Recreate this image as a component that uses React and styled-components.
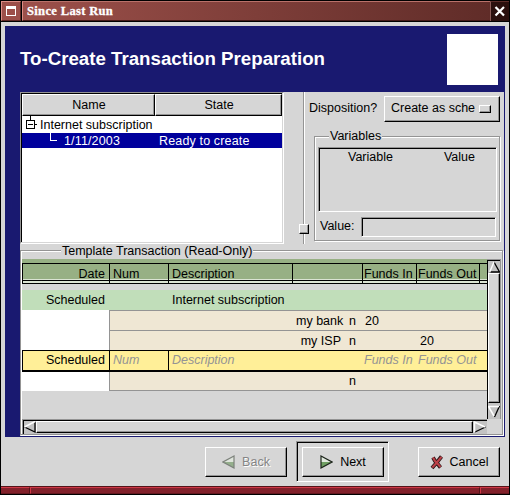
import React from "react";
import styled, { createGlobalStyle, css } from "styled-components";

const GlobalStyle = createGlobalStyle`
  * { box-sizing: border-box; }
  body { margin: 0; background: #000; }
`;

const gray = "#d6d6d6";
const shade = "#949494";

const Window = styled.div`
  width: 510px;
  height: 495px;
  padding: 1px;
  background: #000;
  display: flex;
  flex-direction: column;
  overflow: hidden;
  color: #000;
  font: 12.5px/15px "Liberation Sans", Arial, sans-serif;
  white-space: pre;
  cursor: default;
`;

const TitleBar = styled.header`
  height: 20px;
  flex: none;
  display: flex;
  margin-bottom: 1px;
`;

const MenuButton = styled.div`
  width: 20px;
  margin-right: 1px;
  background: #9c504a;
  border: 1px solid #dc8d85;
  border-right-color: #5d2623;
  border-bottom-color: #5d2623;
`;

const Caption = styled.div`
  flex: 1;
  padding-left: 4px;
  background: linear-gradient(90deg, #9c504a, #602c28);
  border: 1px solid #dc8d85;
  border-top-color: #b9716a;
  border-bottom-color: #431917;
  border-right: 0;
  color: #fff;
  font: bold 12.5px/19px "Liberation Serif", "Times New Roman", serif;
  letter-spacing: 0.35px;
  -webkit-text-stroke: 0.3px #fff;
`;

const CloseButton = styled.div`
  width: 19px;
  background: #2b0f0d;
  border-left: 1px solid #8a5a56;
  border-top: 1px solid #5e2d2a;
`;

const Client = styled.main`
  flex: 1;
  background: ${gray};
  padding: 4px 4px 0;
`;

const Druid = styled.section`
  width: 500px;
  height: 411px;
  padding: 0 1px 1px 15px;
  background: #191970;
`;

const DruidHeader = styled.div`
  height: 66px;
  display: flex;
  justify-content: space-between;
  padding: 8px 6px 0 0;
`;

const DruidTitle = styled.h1`
  margin: 14px 0 0;
  color: #fff;
  font: bold 18.7px/22px "Liberation Sans", Arial, sans-serif;
`;

const Logo = styled.div`
  width: 51px;
  height: 51px;
  background: #fff;
`;

const Page = styled.div`
  height: 344px;
  background: ${gray};
`;

const UpperPane = styled.div`
  height: 152px;
  display: flex;
`;

const sunken = css`
  border: 1px solid;
  border-color: ${shade} #fff #fff ${shade};
`;

const raised = css`
  border: 1px solid;
  border-color: #fff #000 #000 #fff;
  box-shadow: inset -1px -1px ${shade};
`;

const Tree = styled.div`
  ${sunken}
  width: 264px;
  background: ${gray};
`;

const TreeInner = styled.div`
  height: 149px;
  width: 261px;
  border-left: 1px solid #000;
  border-top: 1px solid #000;
  background: #fff;
`;

const TreeHead = styled.div`
  display: grid;
  grid-template-columns: 133px 127px;
  height: 22px;
`;

const HeadCell = styled.div`
  ${raised}
  background: ${gray};
  padding-left: 1px;
  text-align: center;
  line-height: 20px;
`;

const TreeRow = styled.div`
  height: ${(p) => (p.$selected ? 15 : 17)}px;
  display: grid;
  grid-template-columns: 18px 119px 1fr;
  line-height: ${(p) => (p.$selected ? 16 : 18)}px;
  letter-spacing: ${(p) => (p.$selected ? 0.15 : 0)}px;
  color: ${(p) => (p.$selected ? "#fff" : "#000")};
  background: ${(p) => (p.$selected ? "#00009c" : "#fff")};
  svg { display: block; overflow: visible; }
`;

const TreeText = styled.span`
  padding-left: ${(p) => p.$indent || 0}px;
`;

const Splitter = styled.div`
  width: 10px;
  margin-left: 15px;
  display: flex;
  flex-direction: column;
  align-items: center;
  background: linear-gradient(90deg, transparent 4px, ${shade} 4px 5px, #fff 5px 6px, transparent 6px);
`;

const SplitGrip = styled.div`
  ${raised}
  width: 10px;
  height: 10px;
  margin-top: 132px;
  background: ${gray};
`;

const Options = styled.div`
  padding-top: 4px;
  flex: 1;
`;

const Disposition = styled.div`
  display: flex;
  height: 40px;
`;

const DispositionLabel = styled.label`
  width: 75px;
  padding-top: 5px;
`;

const OptionMenu = styled.button`
  ${raised}
  width: 116px;
  height: 26px;
  padding: 0 8px 2px 6px;
  display: flex;
  align-items: center;
  justify-content: space-between;
  background: ${gray};
  font: inherit;
  color: inherit;
`;

const OptionMark = styled.span`
  ${raised}
  width: 12px;
  height: 8px;
  margin-top: 1px;
`;

const Frame = styled.fieldset`
  position: relative;
  margin: 0;
  min-width: 0;
  border: 1px solid ${shade};
  box-shadow: inset 1px 1px #fff, 1px 1px #fff;
`;

const FrameTitle = styled.span`
  position: absolute;
  top: ${(p) => p.$top || -8}px;
  left: ${(p) => p.$left}px;
  padding: 0 1px;
  background: ${gray};
`;

const VariablesFrame = styled(Frame)`
  margin-left: 5px;
  width: 186px;
  height: 105px;
  padding: 10px 3px 3px;
`;

const VariableList = styled.div`
  ${sunken}
  width: 179px;
  height: 65px;
  padding: 2px 21px 0 29px;
  display: flex;
  justify-content: space-between;
  box-shadow: inset 1px 1px #000;
`;

const ValueRow = styled.div`
  display: flex;
  margin-top: 5px;
  padding-left: 2px;
`;

const ValueLabel = styled.label`
  width: 41px;
  padding-top: 2px;
`;

const Entry = styled.div`
  ${sunken}
  width: 135px;
  height: 20px;
  box-shadow: inset 1px 1px #000;
`;

const TemplateFrame = styled(Frame)`
  margin-top: 6px;
  width: 483px;
  height: 185px;
  padding: 8px 0 0 1px;
`;

const Sheet = styled.div`
  display: grid;
  grid-template-columns: 465px 14px;
  grid-template-rows: 160px 15px;
`;

const Register = styled.div`
  background: ${gray};
`;

const columns = "87px 59px 124px 53px 17px 54px 63px 8px";

const RegisterHead = styled.div`
  display: grid;
  grid-template-columns: 87px 59px 124px 70px 54px 63px 8px;
  height: 25px;
  border-top: 4px solid #97b084;
  border-bottom: 1px solid #000;
  background: linear-gradient(#000 1px, #97b084 1px 16px, #dbe4d3 16px 17px, #000 17px 18px, #dbe4d3 18px);
`;

const RegHeadCell = styled.div`
  border-left: 1px solid #000;
  padding: 3px 4px 0 3px;
  line-height: 16px;
  text-align: ${(p) => (p.$right ? "right" : "left")};
  ${(p) => p.$tight && "padding-left: 1px; padding-right: 0;"}
`;

const RegRow = styled.div`
  display: grid;
  grid-template-columns: ${columns};
  height: ${(p) => (p.$last ? 19 : 20)}px;
  line-height: 20px;
  ${(p) => p.$kind === "main" && "margin-top: 6px; height: 20px; background: #c1deba; line-height: 21px;"}
  ${(p) => p.$kind === "active" && "height: 22px; background: #ffef98; border: solid #000; border-width: 1px 0 2px; line-height: 19px; color: #949494; font-style: italic;"}
  ${(p) => p.$kind === "split" && "background: linear-gradient(90deg, #fff 87px, #efe7d4 87px);"}
`;

const Cell = styled.div`
  padding: 0 4px;
  text-align: ${(p) => (p.$right ? "right" : "left")};
  ${(p) => p.$lined && "border-left: 1px solid #000; padding-left: 3px;"}
  ${(p) => p.$dark && "color: #000; font-style: normal;"}
  ${(p) => p.$tight && "padding-left: 2px; padding-right: 0;"}
`;

const SplitCells = styled.div`
  grid-column: 2 / -1;
  display: grid;
  grid-template-columns: 182px 53px 16px 55px 1fr;
  border-top: ${(p) => (p.$last ? 0 : 1)}px solid ${shade};
  border-bottom: ${(p) => (p.$last ? 1 : 0)}px solid ${shade};
  border-left: 1px solid ${shade};
  line-height: ${(p) => (p.$last ? 18 : 20)}px;
  height: ${(p) => (p.$last ? 19 : 20)}px;
`;

const ScrollTrack = styled.div`
  display: flex;
  flex-direction: ${(p) => (p.$vertical ? "column" : "row")};
  border: solid ${shade};
  border-width: ${(p) => (p.$vertical ? "1px 1px 0 0" : "1px 0 0 1px")};
  box-shadow: inset 1px 1px #000;
  padding: ${(p) => (p.$vertical ? "1px 0 0 1px" : "1px 0 1px 1px")};
  background: #c3c3c3;
  svg { display: block; flex: none; }
`;

const Thumb = styled.div`
  ${raised}
  flex: 1;
  background: ${gray};
`;

const Corner = styled.div`
  background: ${gray};
`;

const Actions = styled.footer`
  display: flex;
  height: 49px;
  padding: 4px 4px 0 194px;
`;

const ActionButton = styled.button`
  ${raised}
  width: 82px;
  height: 30px;
  padding: 0;
  display: flex;
  align-items: center;
  justify-content: center;
  gap: ${(p) => p.$gap || 6}px;
  background: ${gray};
  font: inherit;
  color: ${(p) => (p.$off ? "#858585" : "#000")};
  text-shadow: ${(p) => (p.$off ? "1px 1px #fff" : "none")};
  svg { flex: none; }
`;

const Slot = styled.div`
  height: 42px;
  padding: 6px;
`;

const DefaultSlot = styled.div`
  ${sunken}
  width: 93px;
  height: 41px;
  margin: 0 23px 0 3px;
  padding: 5px;
  box-shadow: inset 1px 1px #000;
`;

const ResizeBar = styled.div`
  height: 8px;
  flex: none;
  display: grid;
  grid-template-columns: 29px 450px 29px;
  border-top: 1px solid #551318;
`;

const ResizePart = styled.div`
  background: #82212b;
  border: solid #cf3947;
  border-width: 1px 0 0 ${(p) => (p.$first ? 0 : 1)}px;
  border-right: ${(p) => (p.$end ? 0 : 1)}px solid #551318;
  border-bottom: 1px solid #641820;
`;

const arrows = {
  up: { light: "M1.5 11.5L6 1", dark: "M6 1L11.5 11H1" },
  down: { light: "M6 11L.5 1.5H11", dark: "M11.5 1L6.5 12" },
  left: { light: "M.5 6L11 .5", dark: "M.5 6L11 11V1" },
  right: { light: "M.5 11V1L11 6", dark: "M1 11L11.5 6" },
};

function ScrollArrow({ to, w = 12, h = 12 }) {
  return (
    <svg width={w} height={h} viewBox="0 0 12 12" fill="none">
      <path d={arrows[to].dark} stroke="#000" strokeWidth="1.3" />
      <path d={arrows[to].light} stroke="#fff" strokeWidth="1.5" />
    </svg>
  );
}

function Triangle({ back }) {
  return (
    <svg width="13" height="14" viewBox="0 0 13 14">
      <g transform={back ? "translate(13 0) scale(-1 1)" : undefined} opacity={back ? 0.75 : 1}>
        <path d="M1 1L12 7H1Z" fill="#e2eadf" />
        <path d="M1 7H12L1 13Z" fill={back ? "#7fa374" : "#6f9f62"} />
        <path
          d="M1 1L12 7L1 13Z"
          fill="none"
          stroke={back ? "#5f665d" : "#1c241a"}
          strokeWidth="1.2"
        />
      </g>
    </svg>
  );
}

function CancelIcon() {
  return (
    <svg width="14" height="15" viewBox="0 0 14 15" fill="none">
      <path d="M3 2.5L5 6L7 8L10.5 12.5M11.5 1.5L8 6L5.5 9L2 13" stroke="#281315" strokeWidth="3.8" />
      <path d="M3 2.5L5 6L7 8L10.5 12M11.5 1.8L8 6L5.5 9L2.3 12.5" stroke="#bc4148" strokeWidth="2.1" />
    </svg>
  );
}

function SplitRow({ account, flag, fundsIn, fundsOut, last }) {
  return (
    <RegRow $kind="split" $last={last}>
      <SplitCells $last={last}>
        <Cell />
        <Cell $right>{account}</Cell>
        <Cell>{flag}</Cell>
        <Cell>{fundsIn}</Cell>
        <Cell>{fundsOut}</Cell>
      </SplitCells>
    </RegRow>
  );
}

export default function App() {
  return (
    <>
      <GlobalStyle />
      <Window>
        <TitleBar>
          <MenuButton>
            <svg width="18" height="18" shapeRendering="crispEdges" fill="#fff">
              <path d="M4 4H14V14H4ZM5 7V13H13V7Z" fillRule="evenodd" />
            </svg>
          </MenuButton>
          <Caption>Since Last Run</Caption>
          <CloseButton>
            <svg width="18" height="18">
              <path d="M4.5 5L13 13.5M13 5L4.5 13.5" stroke="#fff" strokeWidth="2.2" />
            </svg>
          </CloseButton>
        </TitleBar>

        <Client>
          <Druid>
            <DruidHeader>
              <DruidTitle>To-Create Transaction Preparation</DruidTitle>
              <Logo />
            </DruidHeader>

            <Page>
              <UpperPane>
                <Tree>
                  <TreeInner>
                    <TreeHead>
                      <HeadCell>Name</HeadCell>
                      <HeadCell>State</HeadCell>
                    </TreeHead>
                    <TreeRow>
                      <svg width="18" height="17" shapeRendering="crispEdges">
                        <path d="M8.5 0V5M4.5 4.5H12.5V12.5H4.5ZM6 8.5H11M12 8.5H15" fill="none" stroke="#000" />
                      </svg>
                      <TreeText>Internet subscription</TreeText>
                    </TreeRow>
                    <TreeRow $selected>
                      <svg width="18" height="15" shapeRendering="crispEdges">
                        <path d="M28.5 0V7.5H35" fill="none" stroke="#fff" />
                      </svg>
                      <TreeText $indent={24}>1/11/2003</TreeText>
                      <TreeText>Ready to create</TreeText>
                    </TreeRow>
                  </TreeInner>
                </Tree>
                <Splitter>
                  <SplitGrip />
                </Splitter>
                <Options>
                  <Disposition>
                    <DispositionLabel>Disposition?</DispositionLabel>
                    <OptionMenu>
                      Create as sche
                      <OptionMark />
                    </OptionMenu>
                  </Disposition>
                  <VariablesFrame>
                    <FrameTitle $left={14}>Variables</FrameTitle>
                    <VariableList>
                      <span>Variable</span>
                      <span>Value</span>
                    </VariableList>
                    <ValueRow>
                      <ValueLabel>Value:</ValueLabel>
                      <Entry />
                    </ValueRow>
                  </VariablesFrame>
                </Options>
              </UpperPane>

              <TemplateFrame>
                <FrameTitle $left={40} $top={-7}>Template Transaction (Read-Only)</FrameTitle>
                <Sheet>
                  <Register>
                    <RegisterHead>
                      <RegHeadCell $right>Date</RegHeadCell>
                      <RegHeadCell>Num</RegHeadCell>
                      <RegHeadCell>Description</RegHeadCell>
                      <RegHeadCell />
                      <RegHeadCell $right $tight>Funds In </RegHeadCell>
                      <RegHeadCell $tight>Funds Out</RegHeadCell>
                      <RegHeadCell />
                    </RegisterHead>
                    <RegRow $kind="main">
                      <Cell $right>Scheduled</Cell>
                      <Cell />
                      <Cell>Internet subscription</Cell>
                    </RegRow>
                    <SplitRow account="my bank" flag="n" fundsIn="20" />
                    <SplitRow account="my ISP" flag="n" fundsOut="20" />
                    <RegRow $kind="active">
                      <Cell $right $dark $lined>Scheduled</Cell>
                      <Cell $lined>Num</Cell>
                      <Cell $lined>Description</Cell>
                      <Cell />
                      <Cell />
                      <Cell $right $tight>Funds In </Cell>
                      <Cell $tight>Funds Out</Cell>
                      <Cell />
                    </RegRow>
                    <SplitRow flag="n" last />
                  </Register>
                  <ScrollTrack $vertical>
                    <ScrollArrow to="up" />
                    <Thumb />
                    <ScrollArrow to="down" h={16} />
                  </ScrollTrack>
                  <ScrollTrack>
                    <ScrollArrow to="left" />
                    <Thumb />
                    <ScrollArrow to="right" w={14} />
                  </ScrollTrack>
                  <Corner />
                </Sheet>
              </TemplateFrame>
            </Page>
          </Druid>

          <Actions>
            <Slot>
              <ActionButton $off $gap={7}>
                <Triangle back />
                Back
              </ActionButton>
            </Slot>
            <DefaultSlot>
              <ActionButton $gap={7}>
                <Triangle />
                Next
              </ActionButton>
            </DefaultSlot>
            <Slot>
              <ActionButton>
                <CancelIcon />
                Cancel
              </ActionButton>
            </Slot>
          </Actions>
        </Client>

        <ResizeBar>
          <ResizePart $first />
          <ResizePart />
          <ResizePart $end />
        </ResizeBar>
      </Window>
    </>
  );
}
